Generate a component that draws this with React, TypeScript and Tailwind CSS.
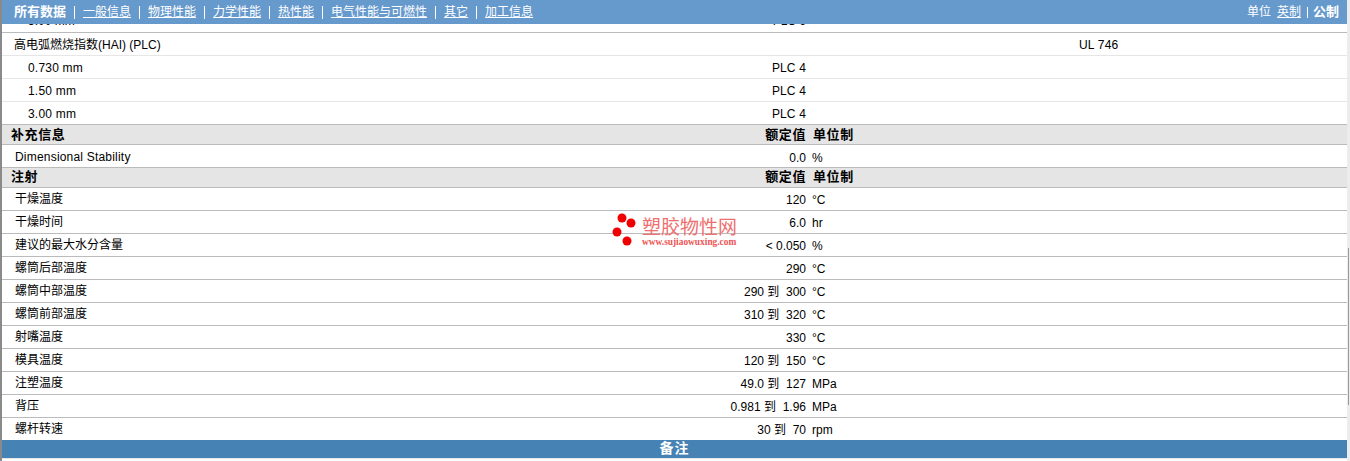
const navLinks = ["一般信息", "物理性能", "力学性能", "热性能", "电气性能与可燃性", "其它", "加工信息"];

interface Fila {
  label: string;
  value?: string;
  unit?: string;
  std?: string;
  sub?: boolean;
  light?: boolean;
  head?: boolean;
  latin?: boolean;
  last?: boolean;
}

const filas: Fila[] = [
  { label: "高电弧燃烧指数(HAI) (PLC)", std: "UL 746", light: true },
  { label: "0.730 mm", value: "PLC 4", sub: true, latin: true, light: true },
  { label: "1.50 mm", value: "PLC 4", sub: true, latin: true, light: true },
  { label: "3.00 mm", value: "PLC 4", sub: true, latin: true },
  { label: "补充信息", head: true, latin: true },
  { label: "Dimensional Stability", value: "0.0", unit: "%", latin: true },
  { label: "注射", head: true },
  { label: "干燥温度", value: "120", unit: "°C" },
  { label: "干燥时间", value: "6.0", unit: "hr" },
  { label: "建议的最大水分含量", value: "< 0.050", unit: "%" },
  { label: "螺筒后部温度", value: "290", unit: "°C" },
  { label: "螺筒中部温度", value: "290 到  300", unit: "°C" },
  { label: "螺筒前部温度", value: "310 到  320", unit: "°C" },
  { label: "射嘴温度", value: "330", unit: "°C" },
  { label: "模具温度", value: "120 到  150", unit: "°C" },
  { label: "注塑温度", value: "49.0 到  127", unit: "MPa" },
  { label: "背压", value: "0.981 到  1.96", unit: "MPa" },
  { label: "螺杆转速", value: "30 到  70", unit: "rpm", last: true },
];

function Row({ f }: { f: Fila }) {
  if (f.head) {
    return (
      <div className={`flex h-[20px] shrink-0 items-center border-b border-[#bbbbbb] bg-[#e5e5e5] text-[13px] font-bold tracking-[0.6px] ${f.latin ? "pt-[1px]" : "pb-[1px]"}`}>
        <div className="w-[757px] pl-[9px]">{f.label}</div>
        <div className="w-[47px] text-right whitespace-nowrap">额定值</div>
        <div className="pl-[7px]">单位制</div>
      </div>
    );
  }
  const borde = f.last ? "h-[22px]" : f.light ? "h-[23px] border-b border-[#e6e6e6]" : "h-[23px] border-b border-[#bbbbbb]";
  return (
    <div className={`flex shrink-0 items-center text-[12px] ${borde} ${f.latin || f.std ? "pt-[1px]" : ""}`}>
      <div className={`relative w-[804px] shrink-0 ${f.sub ? "pl-[26px]" : f.std ? "pl-[12px]" : "pl-[13px]"} ${f.latin ? "tracking-[0.2px]" : ""}`}>
        {f.label}
        {f.value && f.sub && <span className="absolute right-0 top-0 tracking-[0.15px]">{f.value}</span>}
        {f.value && !f.sub && <span className="absolute right-0 top-[1px] whitespace-pre tracking-normal">{f.value}</span>}
      </div>
      <div className="w-[273px] shrink-0 pl-[6px] pt-[2px]">{f.unit}</div>
      {f.std && <div className="tracking-[0.2px]">{f.std}</div>}
    </div>
  );
}

export default function App() {
  return (
    <div className="relative flex h-[461px] w-[1350px] overflow-hidden bg-white font-['Liberation_Sans','Noto_Sans_CJK_SC',sans-serif] text-black">
      <div className="w-[2px] shrink-0 bg-[#8a8a8a]" />

      <div className="flex min-w-0 flex-1 flex-col">
        <div className="flex h-[24px] shrink-0 items-center justify-between bg-[#6699cc] pl-[12px] pr-[8px] text-[12px] text-white">
          <div className="flex items-center">
            <b className="text-[13px]">所有数据</b>
            {navLinks.map((l) => (
              <span key={l} className="flex items-center">
                <span className="mx-[8px] h-[13px] w-px bg-white" />
                <a className="underline">{l}</a>
              </span>
            ))}
          </div>
          <div className="flex items-center">
            <span>单位</span>
            <a className="ml-[6px] underline">英制</a>
            <span className="ml-[6px] mr-[5px] h-[11px] w-px bg-white" />
            <b className="text-[13px]">公制</b>
          </div>
        </div>

        <div className="h-[9px] shrink-0 overflow-hidden border-b border-[#bbbbbb] text-[12px]">
          <div className="-mt-[15px] flex h-[23px] items-center">
            <div className="relative w-[804px] pl-[26px]">
              3.00 mm
              <span className="absolute right-0 top-0">PLC 6</span>
            </div>
          </div>
        </div>

        {filas.map((f) => (
          <Row key={f.label} f={f} />
        ))}

        <div className="flex h-[18px] shrink-0 items-center justify-center bg-[#4682b4] pb-[1px] text-[14px] font-bold tracking-[1px] text-white">
          备注
        </div>
        <div className="h-px shrink-0 bg-[#e6e6e6]" />
      </div>

      <div className="relative w-[3px] shrink-0 bg-[#ececec]">
        <div className="absolute left-[1px] top-[248px] h-[157px] w-px bg-[#9a9a9a]" />
      </div>

      <div className="absolute left-[612px] top-[212px] h-[36px] w-[130px]">
        <svg width="28" height="36" viewBox="0 0 28 36" className="absolute left-0 top-0">
          <circle cx="10" cy="6" r="4.5" fill="#f00000" />
          <circle cx="19" cy="11" r="4.5" fill="#f00000" />
          <circle cx="5" cy="20" r="4.5" fill="#f00000" />
          <circle cx="15" cy="29" r="4.5" fill="#f00000" />
        </svg>
        <div className="absolute left-[30px] top-[5px] whitespace-nowrap text-[19px] leading-[22px] text-[#ee6f6f]">塑胶物性网</div>
        <div className="absolute left-[30px] top-[25px] whitespace-nowrap font-['Liberation_Serif',serif] text-[9.4px] font-bold leading-[10px] text-[#ee5555]">www.sujiaowuxing.com</div>
      </div>
    </div>
  );
}
